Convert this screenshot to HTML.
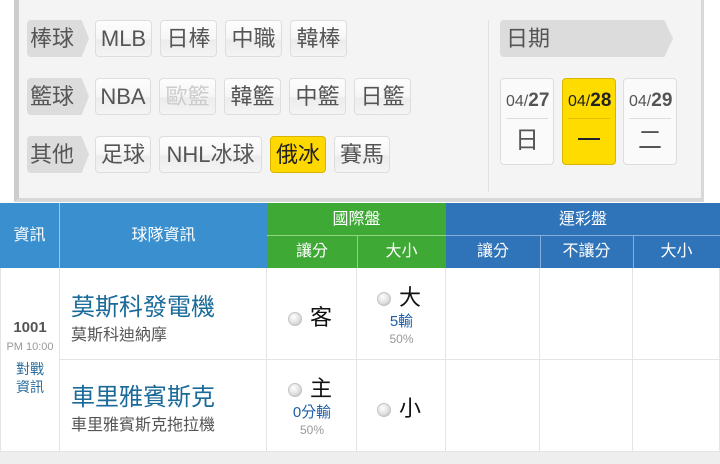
<!DOCTYPE html>
<html><head><meta charset="utf-8"><style>
*{margin:0;padding:0;box-sizing:border-box}
body{width:720px;height:464px;overflow:hidden;background:#fff;font-family:"Liberation Sans","Noto Sans CJK TC",sans-serif;position:relative}
.a{position:absolute}
#panel{left:14px;top:0;width:690px;height:202px;background:#f4f4f4;border-left:5px solid #cdcdcd;border-right:3px solid #d8d8d8;border-bottom:4px solid #d8d8d8}
.lab{position:absolute;height:37px;background:#dcdcdc;color:#555;font-size:22px;line-height:37px;padding-left:3px;border-radius:4px 0 0 4px;clip-path:polygon(0 0,88% 0,100% 50%,88% 100%,0 100%)}
.btn{position:absolute;height:37px;background:linear-gradient(#fdfdfd,#f6f6f6 50%,#ececec 55%,#f4f4f4);border:1px solid #ddd;border-radius:4px;color:#555;font-size:22px;line-height:35px;text-align:center}
.sel{background:#ffd800;border-color:#d9b400;color:#222}
.dt{position:absolute;top:78px;width:54px;height:87px;border:1px solid #ddd;border-radius:4px;background:#fafafa;text-align:center;color:#555}
.dt .t{height:40px;line-height:44px;font-size:16px;border-bottom:1px solid #ddd;margin:0 5px}
.dt .t b{font-size:19px}
.dt .d{line-height:44px;font-size:24px}
.hb{position:absolute;color:#fff;font-size:16px;text-align:center}
.cell{position:absolute;border-right:1px solid #e4e4e4;border-bottom:1px solid #e4e4e4}
.rad{display:inline-block;width:14px;height:14px;border-radius:50%;background:radial-gradient(circle at 40% 35%,#fff,#ddd 60%,#aaa);border:1px solid #c4c4c4;vertical-align:middle;margin-right:8px}
</style></head><body>
<div id="panel" class="a"></div>
<div class="lab" style="left:27px;top:20px;width:62px">棒球</div>
<div class="btn" style="left:95px;top:20px;width:57px">MLB</div>
<div class="btn" style="left:160px;top:20px;width:57px">日棒</div>
<div class="btn" style="left:225px;top:20px;width:57px">中職</div>
<div class="btn" style="left:290px;top:20px;width:57px">韓棒</div>
<div class="lab" style="left:27px;top:78px;width:62px">籃球</div>
<div class="btn" style="left:95px;top:78px;width:56px">NBA</div>
<div class="btn" style="left:159px;top:78px;width:57px;color:#ccc">歐籃</div>
<div class="btn" style="left:224px;top:78px;width:57px">韓籃</div>
<div class="btn" style="left:289px;top:78px;width:57px">中籃</div>
<div class="btn" style="left:354px;top:78px;width:57px">日籃</div>
<div class="lab" style="left:27px;top:136px;width:62px">其他</div>
<div class="btn" style="left:95px;top:136px;width:56px">足球</div>
<div class="btn" style="left:159px;top:136px;width:103px">NHL冰球</div>
<div class="btn sel" style="left:270px;top:136px;width:56px">俄冰</div>
<div class="btn" style="left:334px;top:136px;width:56px">賽馬</div>
<div class="a" style="left:488px;top:20px;width:1px;height:172px;background:#e2e2e2"></div>
<div class="lab" style="left:500px;top:20px;width:173px;clip-path:polygon(0 0,95% 0,100% 50%,95% 100%,0 100%);padding-left:6px">日期</div>
<div class="dt" style="left:500px"><div class="t">04/<b>27</b></div><div class="d">日</div></div>
<div class="dt" style="left:562px;background:#ffdc00;border-color:#d9b400;color:#222"><div class="t" style="border-color:#e0c000">04/<b>28</b></div><div class="d">一</div></div>
<div class="dt" style="left:623px"><div class="t">04/<b>29</b></div><div class="d">二</div></div>

<div class="a" style="left:0;top:203px;width:267px;height:65px;background:#3a8fcf"></div>
<div class="a" style="left:59px;top:203px;width:1px;height:65px;background:#9cc8ea"></div>
<div class="hb" style="left:0;top:203px;width:59px;line-height:65px">資訊</div>
<div class="hb" style="left:60px;top:203px;width:207px;line-height:65px">球隊資訊</div>
<div class="a" style="left:267px;top:203px;width:179px;height:65px;background:#3ea935"></div>
<div class="a" style="left:267px;top:235px;width:179px;height:1px;background:#8fd585"></div>
<div class="a" style="left:357px;top:236px;width:1px;height:32px;background:#8fd585"></div>
<div class="hb" style="left:267px;top:203px;width:179px;line-height:33px">國際盤</div>
<div class="hb" style="left:267px;top:236px;width:90px;line-height:32px">讓分</div>
<div class="hb" style="left:357px;top:236px;width:89px;line-height:32px">大小</div>
<div class="a" style="left:446px;top:203px;width:274px;height:65px;background:#2f73b8"></div>
<div class="a" style="left:446px;top:235px;width:274px;height:1px;background:#85aedb"></div>
<div class="a" style="left:540px;top:236px;width:1px;height:32px;background:#85aedb"></div>
<div class="a" style="left:633px;top:236px;width:1px;height:32px;background:#85aedb"></div>
<div class="hb" style="left:446px;top:203px;width:274px;line-height:33px">運彩盤</div>
<div class="hb" style="left:446px;top:236px;width:94px;line-height:32px">讓分</div>
<div class="hb" style="left:540px;top:236px;width:93px;line-height:32px">不讓分</div>
<div class="hb" style="left:633px;top:236px;width:87px;line-height:32px">大小</div>

<div class="cell" style="left:0;top:268px;width:60px;height:184px;border-left:1px solid #e4e4e4"></div>
<div class="cell" style="left:60px;top:268px;width:207px;height:92px"></div>
<div class="cell" style="left:60px;top:360px;width:207px;height:92px"></div>
<div class="cell" style="left:267px;top:268px;width:90px;height:92px"></div>
<div class="cell" style="left:267px;top:360px;width:90px;height:92px"></div>
<div class="cell" style="left:357px;top:268px;width:89px;height:92px"></div>
<div class="cell" style="left:357px;top:360px;width:89px;height:92px"></div>
<div class="cell" style="left:446px;top:268px;width:94px;height:92px"></div>
<div class="cell" style="left:446px;top:360px;width:94px;height:92px"></div>
<div class="cell" style="left:540px;top:268px;width:93px;height:92px"></div>
<div class="cell" style="left:540px;top:360px;width:93px;height:92px"></div>
<div class="cell" style="left:633px;top:268px;width:87px;height:92px"></div>
<div class="cell" style="left:633px;top:360px;width:87px;height:92px"></div>
<div class="a" style="left:0;top:452px;width:720px;height:12px;background:#eeeeee"></div>

<div class="a" style="left:0;top:319px;width:60px;text-align:center;color:#555;font-size:15px;font-weight:bold">1001</div>
<div class="a" style="left:0;top:341px;width:60px;text-align:center;color:#999;font-size:11px">PM 10:00</div>
<div class="a" style="left:0;top:360px;width:60px;text-align:center;color:#2a6e9e;font-size:14px;line-height:18px">對戰<br>資訊</div>

<div class="a" style="left:71px;top:287px;color:#1a6a9a;font-size:24px">莫斯科發電機</div>
<div class="a" style="left:71px;top:321px;color:#555;font-size:16px">莫斯科迪納摩</div>
<div class="a" style="left:71px;top:377px;color:#1a6a9a;font-size:24px">車里雅賓斯克</div>
<div class="a" style="left:71px;top:411px;color:#555;font-size:16px">車里雅賓斯克拖拉機</div>

<div class="a" style="left:288px;top:300px;font-size:22px;color:#111"><span class="rad"></span>客</div>
<div class="a" style="left:377px;top:280px;font-size:22px;color:#111"><span class="rad"></span>大</div>
<div class="a" style="left:357px;top:310px;width:89px;text-align:center;font-size:15px;color:#1f5fa8">5輸</div>
<div class="a" style="left:357px;top:332px;width:89px;text-align:center;font-size:12px;color:#999">50%</div>
<div class="a" style="left:288px;top:371px;font-size:22px;color:#111"><span class="rad"></span>主</div>
<div class="a" style="left:267px;top:401px;width:90px;text-align:center;font-size:15px;color:#1f5fa8">0分輸</div>
<div class="a" style="left:267px;top:423px;width:90px;text-align:center;font-size:12px;color:#999">50%</div>
<div class="a" style="left:377px;top:391px;font-size:22px;color:#111"><span class="rad"></span>小</div>
</body></html>
